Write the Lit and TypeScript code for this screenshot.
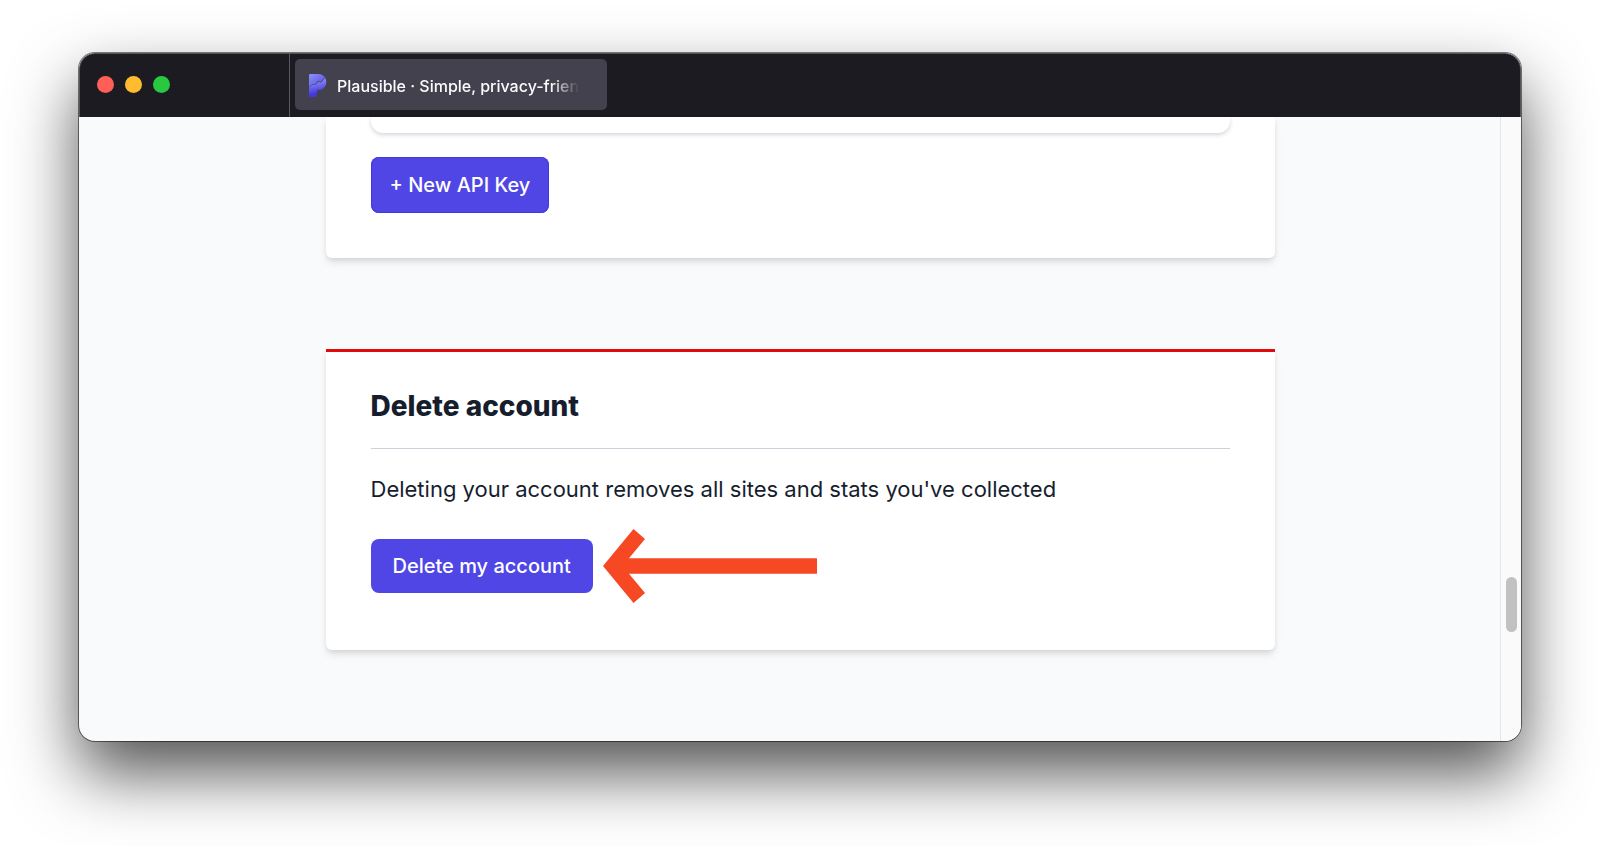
import { LitElement, html, css, svg } from "lit";
import { customElement, property } from "lit/decorators.js";

const favicon = svg`
  <defs>
    <linearGradient id="top" x1="0" y1="0" x2="1" y2="1">
      <stop offset="0" stop-color="#8f93f3" />
      <stop offset="1" stop-color="#4f46e5" />
    </linearGradient>
    <linearGradient id="low" x1="0.3" y1="0" x2="0.5" y2="1">
      <stop offset="0" stop-color="#9a9df8" />
      <stop offset="0.8" stop-color="#4338e0" />
    </linearGradient>
  </defs>
  <path d="M0 1.2Q0 0 1.2 0H9.5C12.6 0 15.2 1.7 16.4 4.2L14 5.2L12.2 7.4Q11.3 8.2 10.4 7.2Q9.3 6.3 8.4 7.5L6.6 9.9Q5.7 10.9 4.6 10.1Q3.5 9.6 2.6 10.7L0 13Z" fill="url(#top)" />
  <path d="M16.6 4.2C19 10.6 15 16 9.5 16H8V20.5Q8 23 5.5 23H1.2Q0 23 0 21.8V13.4L3.2 10.8Q4.1 10.3 5 10.8Q6.4 11.3 7.4 10.1L9.1 7.9Q9.6 7.4 10.2 8Q11.6 9 12.9 7.8L14.8 5.5Z" fill="url(#low)" />
`;

@customElement("browser-tab")
class BrowserTab extends LitElement {
  @property() label = "";

  static styles = css`
    :host {
      display: flex;
      padding: 5px 0 7px;
    }
    .tab {
      display: flex;
      align-items: center;
      gap: 10px;
      width: 312px;
      padding: 2px 28px 0 14px;
      border: 0;
      border-radius: 5px;
      background: #43414d;
      color: #fbfbfe;
      font: 500 16px/24px Inter, "Liberation Sans", sans-serif;
      text-align: left;
    }
    .icon {
      flex: none;
      width: 18px;
      height: 23px;
    }
    .title {
      flex: 1;
      min-width: 0;
      overflow: hidden;
      white-space: nowrap;
      mask-image: linear-gradient(to left, transparent, #000 28px);
    }
  `;

  render() {
    return html`
      <button class="tab" type="button">
        <svg class="icon" viewBox="0 0 18 23" aria-hidden="true">${favicon}</svg>
        <span class="title">${this.label}</span>
      </button>
    `;
  }
}

@customElement("app-root")
class AppRoot extends LitElement {
  static styles = css`
    :host {
      display: flex;
      box-sizing: border-box;
      min-height: 100vh;
      padding: 53px 79px 105px;
      background: #fff;
      color: #161e2e;
      font-family: Inter, "Liberation Sans", sans-serif;
    }
    * {
      box-sizing: border-box;
    }
    .window {
      flex: 1;
      display: flex;
      flex-direction: column;
      min-width: 0;
      border-radius: 16px;
      overflow: hidden;
      background: #f9fafc;
      box-shadow: 0 0 0 1px rgba(0, 0, 0, 0.5), 0 32px 66px rgba(0, 0, 0, 0.68);
    }
    .bar {
      display: flex;
      height: 64px;
      border: 1px solid #55555b;
      border-bottom: 0;
      border-radius: 16px 16px 0 0;
      background: #1c1b22;
    }
    .lights {
      display: flex;
      align-items: center;
      gap: 11px;
      width: 210px;
      padding: 0 0 2px 17px;
      border-right: 1px solid #5b5a61;
      margin-right: 5px;
    }
    .light {
      width: 17px;
      height: 17px;
      padding: 0;
      border: 0;
      border-radius: 50%;
    }
    .close {
      background: #ff5f57;
    }
    .minimize {
      background: #febc2e;
    }
    .zoom {
      background: #28c840;
    }
    .view {
      flex: 1;
      display: grid;
      grid-template-columns: 21px minmax(0, 1fr) 21px;
    }
    .page {
      grid-column: 2;
      width: 100%;
      max-width: 949px;
      margin: 0 auto;
      padding-bottom: 91px;
    }
    .card {
      padding: 0 45px 45px;
      border-radius: 6px;
      background: #fff;
      box-shadow: 0 5px 8px -1px rgba(0, 0, 0, 0.1), 0 3px 5px -1px rgba(0, 0, 0, 0.08);
    }
    .keys {
      border-radius: 0 0 6px 6px;
      margin-bottom: 91px;
    }
    .list {
      height: 16px;
      margin-bottom: 24px;
      border-radius: 0 0 12px 12px;
      background: #fff;
      box-shadow: 0 2px 4px rgba(30, 50, 80, 0.2);
    }
    .danger {
      padding-top: 36px;
      border-top: 3px solid #e10b0b;
      border-radius: 0 0 6px 6px;
    }
    .heading {
      margin: 0;
      padding-bottom: 24px;
      border-bottom: 1px solid #cbd2dc;
      font-size: 28px;
      line-height: 36px;
      font-weight: 800;
    }
    .note {
      margin: 24px 0;
      font-size: 22px;
      line-height: 32px;
    }
    .action {
      border: 0;
      border-radius: 8px;
      background: #4f46e5;
      color: #fff;
      font: 500 20px/28px Inter, "Liberation Sans", sans-serif;
      white-space: nowrap;
    }
    .create {
      padding: 14px 19px;
      box-shadow: inset 0 0 0 1px #4338d8;
    }
    .remove {
      padding: 13px 22px;
    }
    .row {
      display: flex;
      align-items: center;
      gap: 10px;
      padding-bottom: 2px;
    }
    .arrow {
      flex: none;
      width: 214px;
      height: 74px;
    }
    .track {
      display: flex;
      flex-direction: column;
      justify-content: flex-end;
      align-items: center;
      padding-bottom: 109px;
      border-left: 1px solid #e6e6e8;
      background: #fafafa;
    }
    .thumb {
      width: 11px;
      height: 55px;
      border-radius: 6px;
      background: #c1c1c1;
    }
  `;

  render() {
    return html`
      <div class="window">
        <header class="bar">
          <div class="lights">
            <button class="light close" type="button" aria-label="Close"></button>
            <button class="light minimize" type="button" aria-label="Minimize"></button>
            <button class="light zoom" type="button" aria-label="Zoom"></button>
          </div>
          <browser-tab label="Plausible · Simple, privacy-friendly"></browser-tab>
        </header>
        <div class="view">
          <main class="page">
            <section class="card keys">
              <div class="list"></div>
              <button class="action create" type="button">+ New API Key</button>
            </section>
            <section class="card danger">
              <h2 class="heading">Delete account</h2>
              <p class="note">Deleting your account removes all sites and stats you've collected</p>
              <div class="row">
                <button class="action remove" type="button">Delete my account</button>
                <svg class="arrow" viewBox="0 0 214 74" aria-hidden="true">
                  <path d="M0 37L30.5 0L42 10L26 29.3H214V44.7H26L42 64L30.5 74Z" fill="#f54823" />
                </svg>
              </div>
            </section>
          </main>
          <div class="track"><div class="thumb"></div></div>
        </div>
      </div>
    `;
  }
}
